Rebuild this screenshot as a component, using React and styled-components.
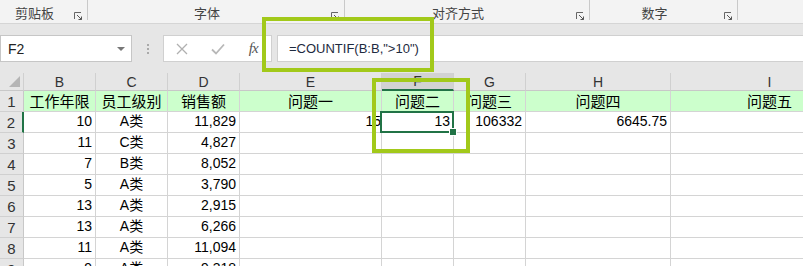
import React from "react";
import styled, { createGlobalStyle } from "styled-components";

const GlobalStyle = createGlobalStyle`
  html, body { margin: 0; padding: 0; background: #ffffff; overflow: hidden; }
  body { font-family: "Liberation Sans", "Noto Sans CJK SC", sans-serif; }
`;

const Page = styled.div`
  position: relative;
  width: 803px;
  height: 266px;
  overflow: hidden;
  background: #ffffff;
`;

const Ribbon = styled.div`
  display: flex;
  height: 24px;
  box-sizing: border-box;
  background: #f3f3f3;
  border-bottom: 1px solid #d5d5d5;
`;

const Group = styled.div`
  position: relative;
  width: ${(p) => p.$w}px;
  flex: ${(p) => (p.$w ? "none" : "1")};
  height: 20px;
  box-sizing: border-box;
  border-right: ${(p) => (p.$last ? "none" : "1px solid #c9c9c9")};
  display: flex;
  align-items: flex-end;
  justify-content: center;
  padding-right: 18px;
`;

const GroupLabel = styled.span`
  font-family: "Noto Sans CJK SC", sans-serif;
  font-size: 13px;
  line-height: 15px;
  color: #444;
`;

const Launcher = styled.svg`
  position: absolute;
  right: 4px;
  top: 12px;
`;

const BarArea = styled.div`
  background: #e6e6e6;
  padding: 11px 0 11px 0;
  height: 49px;
  box-sizing: border-box;
`;

const FormulaRow = styled.div`
  display: flex;
  align-items: center;
  height: 27px;
`;

const NameBox = styled.div`
  width: 132px;
  height: 27px;
  box-sizing: border-box;
  background: #fff;
  border: 1px solid #c6c6c6;
  display: flex;
  align-items: center;
  justify-content: space-between;
  padding: 0 6px 0 7px;
  font-size: 14px;
  color: #222;
`;

const Caret = styled.span`
  width: 0;
  height: 0;
  border-left: 4px solid transparent;
  border-right: 4px solid transparent;
  border-top: 4px solid #777;
`;

const Grip = styled.div`
  width: 31px;
  display: flex;
  flex-direction: column;
  align-items: center;
  gap: 2px;
  & > span { width: 2px; height: 2px; background: #aaa; }
`;

const ActionBox = styled.div`
  width: 109px;
  height: 27px;
  box-sizing: border-box;
  background: #fff;
  border: 1px solid #d0d0d0;
  display: flex;
  align-items: center;
  margin-right: 5px;
`;

const Slot = styled.div`
  width: 36px;
  display: flex;
  justify-content: center;
  align-items: center;
`;

const Fx = styled.span`
  font-family: "Liberation Serif", serif;
  font-style: italic;
  font-size: 15px;
  color: #555;
  letter-spacing: -1px;
`;

const FormulaBox = styled.div`
  flex: 1;
  height: 27px;
  box-sizing: border-box;
  background: #fff;
  border: 1px solid #d0d0d0;
  border-right: none;
  display: flex;
  align-items: center;
  padding-left: 11px;
  font-size: 13px;
  color: #1e2a40;
`;

const Sheet = styled.div`
  display: grid;
  grid-template-columns: 24px 72px 72px 72px 142px 72px 72px 145px 198px;
  grid-template-rows: 18px repeat(9, 21px);
  width: 869px;
`;

const ColHead = styled.div`
  box-sizing: border-box;
  background: ${(p) => (p.$active ? "#d2d2d2" : "#e6e6e6")};
  border-right: 1px solid #d0d0d0;
  border-bottom: ${(p) => (p.$active ? "2px solid #217346" : "1px solid #c8c8c8")};
  display: flex;
  align-items: center;
  justify-content: center;
  font-size: 14px;
  color: #333;
`;

const Corner = styled(ColHead)`
  position: relative;
  & > span {
    position: absolute;
    right: 3px;
    bottom: 3px;
    width: 11px;
    height: 11px;
    background: #b5b5b5;
    clip-path: polygon(100% 0, 100% 100%, 0 100%);
  }
`;

const RowHead = styled.div`
  box-sizing: border-box;
  background: #e6e6e6;
  border-right: ${(p) => (p.$active ? "2px solid #217346" : "1px solid #c8c8c8")};
  border-bottom: 1px solid #d0d0d0;
  display: flex;
  align-items: flex-end;
  justify-content: center;
  padding-bottom: 1px;
  font-size: 15px;
  color: #333;
`;

const Cell = styled.div`
  position: relative;
  box-sizing: border-box;
  background: ${(p) => p.$bg || "#fff"};
  border-right: 1px solid #d4d4d4;
  border-bottom: 1px solid #d4d4d4;
  display: flex;
  align-items: flex-end;
  justify-content: ${(p) =>
    p.$align === "right" ? "flex-end" : p.$align === "center" ? "center" : "flex-start"};
  padding: 0 ${(p) => (p.$pr !== undefined ? p.$pr : 3)}px 1px 3px;
  font-family: ${(p) =>
    p.$cjk ? '"Noto Sans CJK SC", sans-serif' : '"Liberation Sans", "Noto Sans CJK SC", sans-serif'};
  font-size: ${(p) => (p.$cjk ? 15 : 14)}px;
  line-height: 19px;
  color: #000;
  white-space: nowrap;
  ${(p) =>
    p.$selected &&
    `
    &::after {
      content: "";
      position: absolute;
      left: -2px; top: -1px; right: -1px; bottom: -1px;
      border: 2px solid #217346;
      z-index: 2;
    }
    &::before {
      content: "";
      position: absolute;
      right: -4px; bottom: -4px;
      width: 6px; height: 6px;
      background: #217346;
      border: 1px solid #fff;
      z-index: 3;
    }
  `}
`;

const Callout = styled.div`
  position: absolute;
  left: ${(p) => p.$x}px;
  top: ${(p) => p.$y}px;
  width: ${(p) => p.$w}px;
  height: ${(p) => p.$h}px;
  box-sizing: border-box;
  border: 4px solid #a2c91a;
  z-index: 5;
  pointer-events: none;
`;

const LauncherIcon = () => (
  <Launcher width="9" height="9" viewBox="0 0 9 9">
    <path d="M0.5 7V0.5H7" fill="none" stroke="#666" strokeWidth="1" />
    <path d="M3 3L7.5 7.5M7.5 4.5V7.5H4.5" fill="none" stroke="#555" strokeWidth="1" />
  </Launcher>
);

const groups = [
  { w: 88, label: "剪贴板" },
  { w: 257, label: "字体" },
  { w: 245, label: "对齐方式" },
  { w: 148, label: "数字" },
];

const cols = ["B", "C", "D", "E", "F", "G", "H", "I"];
const heads = ["工作年限", "员工级别", "销售额", "问题一", "问题二", "问题三", "问题四", "问题五"];

const data = [
  [10, "A类", "11,829"],
  [11, "C类", "4,827"],
  [7, "B类", "8,052"],
  [5, "A类", "3,790"],
  [13, "A类", "2,915"],
  [13, "A类", "6,266"],
  [11, "A类", "11,094"],
  [9, "A类", "9,318"],
];

function App() {
  return (
    <Page>
      <GlobalStyle />
      <Ribbon>
        {groups.map((g) => (
          <Group key={g.label} $w={g.w}>
            <GroupLabel>{g.label}</GroupLabel>
            <LauncherIcon />
          </Group>
        ))}
        <Group $last />
      </Ribbon>
      <BarArea>
        <FormulaRow>
          <NameBox>
            F2
            <Caret />
          </NameBox>
          <Grip>
            <span />
            <span />
            <span />
          </Grip>
          <ActionBox>
            <Slot>
              <svg width="12" height="12" viewBox="0 0 12 12">
                <path d="M1 1L11 11M11 1L1 11" stroke="#b0b0b0" strokeWidth="1.3" />
              </svg>
            </Slot>
            <Slot>
              <svg width="14" height="12" viewBox="0 0 14 12">
                <path d="M1 6.5L5 10.5L13 1.5" fill="none" stroke="#b8b8b8" strokeWidth="1.8" />
              </svg>
            </Slot>
            <Slot>
              <Fx>fx</Fx>
            </Slot>
          </ActionBox>
          <FormulaBox>=COUNTIF(B:B,"&gt;10")</FormulaBox>
        </FormulaRow>
      </BarArea>
      <Sheet>
        <Corner>
          <span />
        </Corner>
        {cols.map((c) => (
          <ColHead key={c} $active={c === "F"}>
            {c}
          </ColHead>
        ))}

        <RowHead>1</RowHead>
        {heads.map((h) => (
          <Cell key={h} $bg="#ccffcc" $align="center" $cjk>
            {h}
          </Cell>
        ))}

        {data.map((r, i) => {
          const row = i + 2;
          return (
            <React.Fragment key={row}>
              <RowHead $active={row === 2}>{row}</RowHead>
              <Cell $align="right">{r[0]}</Cell>
              <Cell $align="center">{r[1]}</Cell>
              <Cell $align="right">{r[2]}</Cell>
              <Cell $align="right" $pr={0}>{row === 2 ? "15" : ""}</Cell>
              <Cell $align="right" $selected={row === 2}>{row === 2 ? "13" : ""}</Cell>
              <Cell $align="right">{row === 2 ? "106332" : ""}</Cell>
              <Cell $align="right">{row === 2 ? "6645.75" : ""}</Cell>
              <Cell />
            </React.Fragment>
          );
        })}
      </Sheet>
      <Callout $x={262} $y={17} $w={172} $h={55} />
      <Callout $x={372} $y={78} $w={98} $h={75} />
    </Page>
  );
}

export default App;
